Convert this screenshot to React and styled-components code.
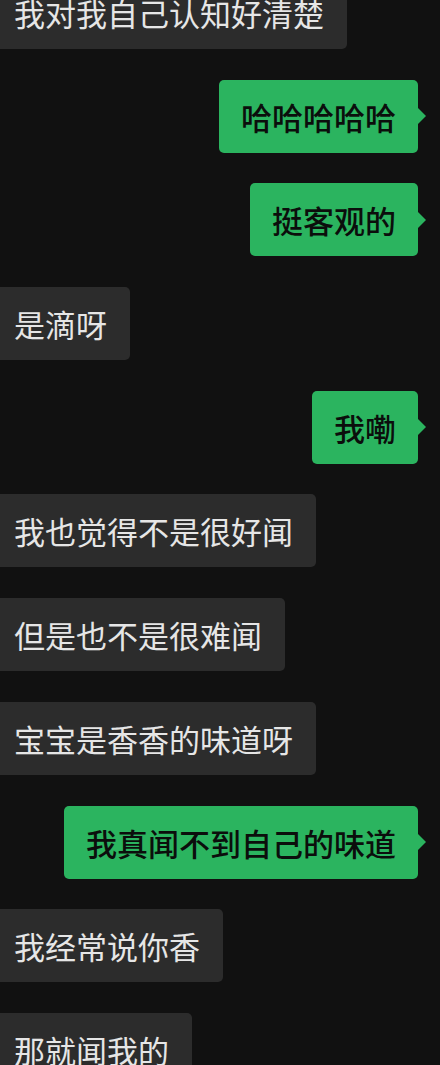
import styled, { createGlobalStyle } from "styled-components";

const messages = [
  { from: "them", text: "我对我自己认知好清楚" },
  { from: "me", text: "哈哈哈哈哈" },
  { from: "me", text: "挺客观的" },
  { from: "them", text: "是滴呀" },
  { from: "me", text: "我嘞" },
  { from: "them", text: "我也觉得不是很好闻" },
  { from: "them", text: "但是也不是很难闻" },
  { from: "them", text: "宝宝是香香的味道呀" },
  { from: "me", text: "我真闻不到自己的味道" },
  { from: "them", text: "我经常说你香" },
  { from: "them", text: "那就闻我的" },
];

const GlobalStyle = createGlobalStyle`
  html, body {
    margin: 0;
    padding: 0;
    background: #111111;
    overflow: hidden;
  }
  body {
    font-family: "Noto Sans CJK SC", "Noto Sans", sans-serif;
  }
`;

const Screen = styled.div`
  width: 440px;
  height: 1065px;
  overflow: hidden;
  background: #111111;
`;

const List = styled.div`
  display: flex;
  flex-direction: column;
  gap: 30.7px;
  margin-top: -24px;
`;

const Row = styled.div`
  display: flex;
  justify-content: ${p => (p.$mine ? "flex-end" : "flex-start")};
  padding-right: ${p => (p.$mine ? "22px" : "0")};
  margin-left: ${p => (p.$mine ? "0" : "-9px")};
`;

const Bubble = styled.div`
  position: relative;
  display: flex;
  align-items: center;
  height: 73px;
  padding: ${p => (p.$mine ? "0 22px" : "0 23px")};
  box-sizing: border-box;
  border-radius: 5px;
  font-size: 31px;
  font-weight: ${p => (p.$mine ? 500 : 400)};
  line-height: 1;
  white-space: nowrap;
  background: ${p => (p.$mine ? "#2bb45f" : "#2c2c2c")};
  color: ${p => (p.$mine ? "#0b0e0c" : "#e6e6e6")};

  ${p =>
    p.$mine &&
    `
    &::after {
      content: "";
      position: absolute;
      top: 50%;
      right: -8px;
      margin-top: -8px;
      border-top: 8px solid transparent;
      border-bottom: 8px solid transparent;
      border-left: 8px solid #2bb45f;
    }
  `}
`;

const App = () => (
  <>
    <GlobalStyle />
    <Screen>
      <List>
        {messages.map((m, i) => (
          <Row key={i} $mine={m.from === "me"}>
            <Bubble $mine={m.from === "me"}>{m.text}</Bubble>
          </Row>
        ))}
      </List>
    </Screen>
  </>
);

export default App;
